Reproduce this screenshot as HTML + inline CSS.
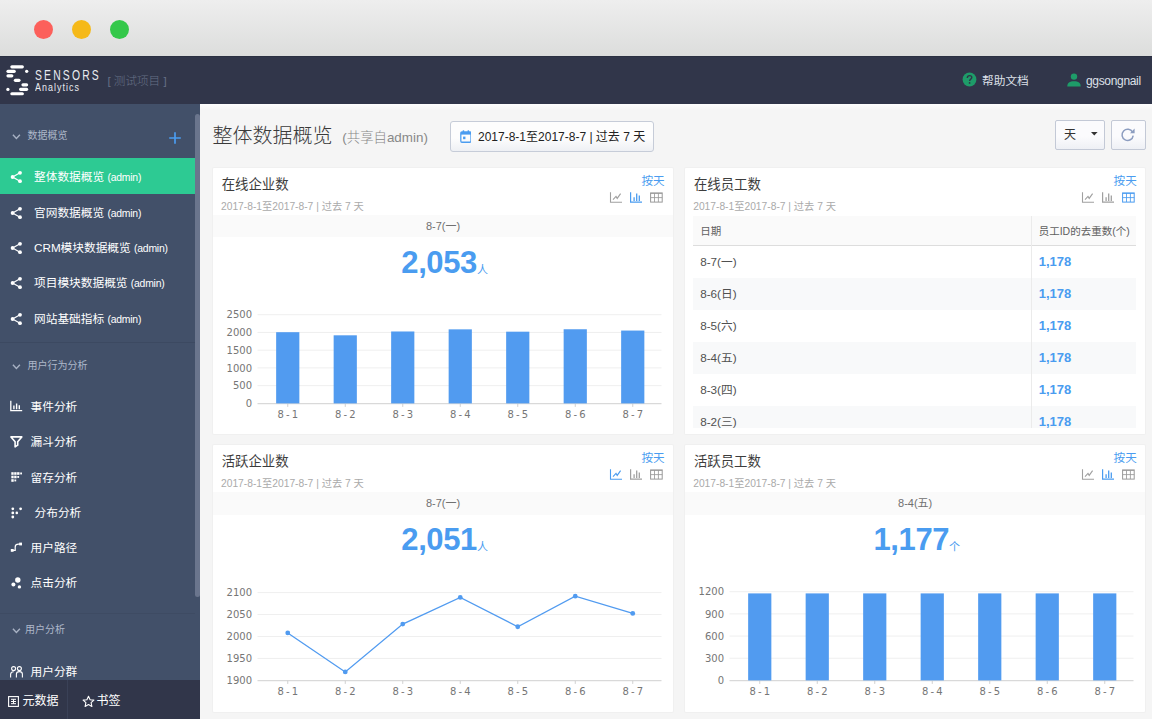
<!DOCTYPE html>
<html lang="zh-CN">
<head>
<meta charset="utf-8">
<title>整体数据概览</title>
<style>
*{box-sizing:border-box;margin:0;padding:0}
html,body{width:1152px;height:719px;overflow:hidden;background:#f5f5f5}
body{font-family:"Liberation Sans","Noto Sans CJK SC",sans-serif;font-size:12px;color:#333;position:relative}
.abs{position:absolute}
.titlebar{position:absolute;left:0;top:0;width:1152px;height:56px;background:linear-gradient(#eeeeee,#dcdddc)}
.dot{position:absolute;top:19.5px;width:19px;height:19px;border-radius:50%}
.header{position:absolute;left:0;top:56px;width:1152px;height:48px;background:#31364a;box-shadow:inset 0 1px 0 #2b3042}
.sidebar{position:absolute;left:0;top:104px;width:200px;height:615px;background:#425069;overflow:hidden}
.thumb{position:absolute;left:195px;top:10px;width:5px;height:482.5px;background:#6a758d;border-radius:2.5px}
.sec{position:absolute;left:0;width:195px;color:#aeb8c9;font-size:10px;white-space:nowrap}
.item{position:absolute;left:0;width:195px;height:35.5px;line-height:35px;color:#fff;font-size:11.7px;white-space:nowrap}
.onbg{position:absolute;left:0;top:54.3px;width:195px;height:35.3px;background:#2dca93}
.item .tx{position:absolute;left:34px;top:0.3px}
.item .tx small{font-size:10.4px;letter-spacing:-0.2px}
.item svg{position:absolute}
.sep{position:absolute;left:0;width:195px;height:1px;background:#3c4961}
.botbar{position:absolute;left:0;top:575.5px;width:200px;height:40px;background:#31364a;color:#fff;font-size:12px}
.main{position:absolute;left:200px;top:104px;width:952px;height:615px;background:#f5f5f5}
.card{position:absolute;width:460.2px;height:267px;background:#fff;border-radius:1px;overflow:hidden;box-shadow:0 0 0 1px #f0f0f0}
.card h3{position:absolute;left:8.7px;top:9px;font-size:13.4px;font-weight:400;color:#3d3d3d;line-height:16px;white-space:nowrap}
.card .sub{position:absolute;left:8px;top:33.2px;font-size:10.25px;color:#aaa;line-height:12px;white-space:nowrap}
.card .by{position:absolute;right:8.6px;top:6px;font-size:11.6px;color:#4a9cf0;line-height:14px}
.card .band{position:absolute;left:0;top:47.5px;width:460px;height:22.3px;background:#fafafa;text-align:center;font-size:11px;line-height:23.4px;color:#707070}
.card .big{position:absolute;left:1.6px;top:75.5px;width:460px;text-align:center;color:#4a9cf0;font-weight:700;font-size:31px;line-height:40px;letter-spacing:-0.4px;white-space:nowrap}
.card .big span{font-size:11px;font-weight:400;letter-spacing:0;position:relative;top:1px}
svg text{font-family:"DejaVu Sans",sans-serif}
</style>
</head>
<body>
<div class="titlebar">
  <div class="dot" style="left:34px;background:#fc605b"></div>
  <div class="dot" style="left:72px;background:#f5b919"></div>
  <div class="dot" style="left:110px;background:#34c84a"></div>
</div>
<div class="header" id="header">
  <svg class="abs" style="left:0;top:0" width="40" height="48" viewBox="0 0 40 48">
    <g fill="#fff">
      <rect x="10.3" y="9.3" width="13.6" height="3.1" rx="1.55"/>
      <rect x="6.4" y="13.8" width="9.4" height="3.1" rx="1.55"/>
      <circle cx="26.7" cy="15.35" r="1.65"/>
      <rect x="6.4" y="18.3" width="7" height="3.1" rx="1.55"/>
      <rect x="13.8" y="22.8" width="6.8" height="3.1" rx="1.55"/>
      <rect x="21.4" y="27.3" width="6.8" height="3.1" rx="1.55"/>
      <rect x="19" y="31.8" width="9.2" height="3.1" rx="1.55"/>
      <circle cx="7.9" cy="33.4" r="1.65"/>
      <rect x="10.3" y="36.2" width="13.6" height="3.1" rx="1.55"/>
    </g>
  </svg>
  <div class="abs" id="lg1" style="left:35.4px;top:11.2px;font-size:14px;line-height:16px;color:#e9ebf0;letter-spacing:2.95px;transform:scaleX(0.74);transform-origin:0 0;white-space:nowrap">SENSORS</div>
  <div class="abs" id="lg2" style="left:35.4px;top:25px;font-size:10.5px;line-height:12px;color:#e9ebf0;letter-spacing:1.2px;transform:scaleX(0.85);transform-origin:0 0;white-space:nowrap">Analytics</div>
  <div class="abs" id="proj" style="left:107.4px;top:17.6px;font-size:11.6px;line-height:14px;color:#667086;white-space:nowrap;font-weight:300">[ 测试项目 ]</div>
  <svg class="abs" style="left:962px;top:16px" width="15" height="15" viewBox="0 0 15 15">
    <circle cx="7.5" cy="7.5" r="6.9" fill="#1e9c69"/>
    <path d="M5.3 5.9 C5.3 4.4 6.3 3.6 7.6 3.6 C8.9 3.6 9.8 4.4 9.8 5.5 C9.8 7.1 7.6 7.2 7.6 8.9" fill="none" stroke="#2f3549" stroke-width="1.4"/>
    <circle cx="7.6" cy="10.9" r="0.9" fill="#2f3549"/>
  </svg>
  <div class="abs" id="help" style="left:982px;top:16.8px;font-size:11.7px;line-height:16px;color:#dde0e8;white-space:nowrap">帮助文档</div>
  <svg class="abs" style="left:1067px;top:17px" width="14" height="14" viewBox="0 0 14 14">
    <circle cx="7" cy="3.6" r="3.2" fill="#1e9c69"/>
    <path d="M0.3 13.4 C0.3 9.6 2.6 8.2 7 8.2 C11.4 8.2 13.7 9.6 13.7 13.4 Z" fill="#1e9c69"/>
  </svg>
  <div class="abs" id="user" style="left:1086px;top:16.6px;font-size:12px;line-height:16px;color:#dde0e8;white-space:nowrap;letter-spacing:-0.33px">ggsongnail</div>
</div>
<div class="sidebar" id="sidebar">
<div class="thumb"></div>
<div class="sec" style="top:24px;height:14px;line-height:14px"><svg class="abs" style="left:12px;top:5.6px" width="9" height="6" viewBox="0 0 9 6"><path d="M0.9 0.8 L4.4 4.4 L7.9 0.8" fill="none" stroke="#a8b2c4" stroke-width="1.4"/></svg><span class="abs" style="left:27.5px;top:1.2px">数据概览</span></div>
<svg class="abs" style="left:168px;top:27.3px" width="14" height="14" viewBox="0 0 14 14"><path d="M7 1.2 V12.8 M1.2 7 H12.8" stroke="#4a9cf0" stroke-width="1.7" fill="none"/></svg>
<div class="onbg"></div><div class="item" style="top:55.1px"><svg style="left:10px;top:11.2px" width="14" height="14" viewBox="0 0 14 14"><path d="M10 2.8 L2.6 7 L10 11.2" fill="none" stroke="#fff" stroke-width="1.2"/><circle cx="2.6" cy="7" r="1.9" fill="#fff"/><circle cx="10" cy="2.8" r="1.9" fill="#fff"/><circle cx="10" cy="11.2" r="1.9" fill="#fff"/></svg><span class="tx">整体数据概览 <small>(admin)</small></span></div>
<div class="item" style="top:90.6px"><svg style="left:10px;top:11.2px" width="14" height="14" viewBox="0 0 14 14"><path d="M10 2.8 L2.6 7 L10 11.2" fill="none" stroke="#fff" stroke-width="1.2"/><circle cx="2.6" cy="7" r="1.9" fill="#fff"/><circle cx="10" cy="2.8" r="1.9" fill="#fff"/><circle cx="10" cy="11.2" r="1.9" fill="#fff"/></svg><span class="tx">官网数据概览 <small>(admin)</small></span></div>
<div class="item" style="top:125.9px"><svg style="left:10px;top:11.2px" width="14" height="14" viewBox="0 0 14 14"><path d="M10 2.8 L2.6 7 L10 11.2" fill="none" stroke="#fff" stroke-width="1.2"/><circle cx="2.6" cy="7" r="1.9" fill="#fff"/><circle cx="10" cy="2.8" r="1.9" fill="#fff"/><circle cx="10" cy="11.2" r="1.9" fill="#fff"/></svg><span class="tx">CRM模块数据概览 <small>(admin)</small></span></div>
<div class="item" style="top:161.1px"><svg style="left:10px;top:11.2px" width="14" height="14" viewBox="0 0 14 14"><path d="M10 2.8 L2.6 7 L10 11.2" fill="none" stroke="#fff" stroke-width="1.2"/><circle cx="2.6" cy="7" r="1.9" fill="#fff"/><circle cx="10" cy="2.8" r="1.9" fill="#fff"/><circle cx="10" cy="11.2" r="1.9" fill="#fff"/></svg><span class="tx">项目模块数据概览 <small>(admin)</small></span></div>
<div class="item" style="top:196.4px"><svg style="left:10px;top:11.2px" width="14" height="14" viewBox="0 0 14 14"><path d="M10 2.8 L2.6 7 L10 11.2" fill="none" stroke="#fff" stroke-width="1.2"/><circle cx="2.6" cy="7" r="1.9" fill="#fff"/><circle cx="10" cy="2.8" r="1.9" fill="#fff"/><circle cx="10" cy="11.2" r="1.9" fill="#fff"/></svg><span class="tx">网站基础指标 <small>(admin)</small></span></div>
<div class="sep" style="top:238px"></div>
<div class="sec" style="top:254px;height:14px;line-height:14px"><svg class="abs" style="left:12px;top:5.6px" width="9" height="6" viewBox="0 0 9 6"><path d="M0.9 0.8 L4.4 4.4 L7.9 0.8" fill="none" stroke="#a8b2c4" stroke-width="1.4"/></svg><span class="abs" style="left:27.5px;top:0.8px">用户行为分析</span></div>
<div class="item" style="top:284.8px"><svg style="left:10px;top:11px" width="13" height="12" viewBox="0 0 13 12"><path d="M0.8 0.8 V10.7 H12.2" fill="none" stroke="#fff" stroke-width="1.3"/><path d="M3.9 5.6 V9.2 M6.6 3.6 V9.2 M9.3 5.2 V9.2" stroke="#fff" stroke-width="1.4" fill="none"/></svg><span class="tx" style="left:30.5px">事件分析</span></div>
<div class="item" style="top:320px"><svg style="left:10px;top:12px" width="13" height="12" viewBox="0 0 13 12"><path d="M1 0.9 H11.8 L7.7 5.8 V9.2 L5.1 10.9 V5.8 Z" fill="none" stroke="#fff" stroke-width="1.6" stroke-linejoin="round"/></svg><span class="tx" style="left:30.5px">漏斗分析</span></div>
<div class="item" style="top:355.3px"><svg style="left:11px;top:13px" width="12" height="11" viewBox="0 0 12 11"><g fill="#fff"><rect x="0.3" y="0.2" width="2.4" height="2.6"/><rect x="3.2" y="0.2" width="2.4" height="2.6"/><rect x="6.1" y="0.2" width="2.4" height="2.6"/><rect x="9.2" y="0.5" width="1.8" height="1.9"/><rect x="0.3" y="3.7" width="2.4" height="2.6"/><rect x="3.2" y="3.7" width="2.4" height="2.6"/><rect x="6.3" y="4" width="1.8" height="1.9"/><rect x="0.3" y="7.2" width="2.4" height="2.6"/><rect x="3.4" y="7.5" width="1.8" height="1.9"/></g></svg><span class="tx" style="left:30.5px">留存分析</span></div>
<div class="item" style="top:390.5px"><svg style="left:11px;top:12px" width="12" height="12" viewBox="0 0 12 12"><g fill="#fff"><circle cx="1.8" cy="1.8" r="1.4"/><circle cx="1.8" cy="5.9" r="1.4"/><circle cx="1.8" cy="10" r="1.4"/><circle cx="5.8" cy="5.9" r="1.3"/><circle cx="9.6" cy="1.8" r="1.4"/></g></svg><span class="tx" style="left:34.5px">分布分析</span></div>
<div class="item" style="top:425.7px"><svg style="left:10px;top:12px" width="13" height="11" viewBox="0 0 13 11"><path d="M2.2 8.4 H5.2 V5 C5.2 2.6 6.4 2.2 8.4 2.2 H10.4" fill="none" stroke="#fff" stroke-width="1.2"/><rect x="0.8" y="7" width="2.8" height="2.8" fill="#fff"/><rect x="9.2" y="0.6" width="2.8" height="2.8" fill="#fff"/></svg><span class="tx" style="left:30.5px">用户路径</span></div>
<div class="item" style="top:461px"><svg style="left:11px;top:12px" width="12" height="12" viewBox="0 0 12 12"><g fill="#fff"><circle cx="6.8" cy="3" r="2.7"/><circle cx="2.4" cy="7.6" r="2"/><circle cx="8.4" cy="9.9" r="1.7"/></g></svg><span class="tx" style="left:30.5px">点击分析</span></div>
<div class="sep" style="top:508.5px;background:#3e4b63"></div>
<div class="sec" style="top:518.5px;height:14px;line-height:14px"><svg class="abs" style="left:12px;top:5.6px" width="9" height="6" viewBox="0 0 9 6"><path d="M0.9 0.8 L4.4 4.4 L7.9 0.8" fill="none" stroke="#a8b2c4" stroke-width="1.4"/></svg><span class="abs" style="left:25px">用户分析</span></div>
<div class="item" style="top:549.5px"><svg style="left:10px;top:12px" width="13" height="12" viewBox="0 0 13 12"><g fill="none" stroke="#fff" stroke-width="1.1"><circle cx="3.6" cy="2.6" r="2"/><circle cx="9.4" cy="2.6" r="2"/><path d="M0.6 11.4 V8.6 C0.6 6.6 2 5.8 3.6 5.8 M12.4 11.4 V8 C12.4 6.4 11 5.6 9.4 5.6 C7.8 5.6 6.4 6.4 6.4 8 V11.4"/></g></svg><span class="tx" style="left:30.5px">用户分群</span></div>
<div class="botbar"><div class="abs" style="left:67px;top:0;width:1px;height:39px;background:#3a4157"></div><svg class="abs" style="left:8px;top:16px" width="11" height="11" viewBox="0 0 11 11"><rect x="0.6" y="0.6" width="9.8" height="9.8" fill="none" stroke="#fff" stroke-width="1.1"/><path d="M3 3.3 H8 M3 5.5 H8 M3 7.7 H8 M5.5 3.3 V7.7" stroke="#fff" stroke-width="1" fill="none"/></svg><span class="abs" style="left:22.5px;top:13.5px;line-height:16px;white-space:nowrap">元数据</span><svg class="abs" style="left:82px;top:15px" width="13" height="13" viewBox="0 0 13 13"><path d="M6.5 1.2 L8.1 4.7 L11.9 5.1 L9.1 7.7 L9.9 11.5 L6.5 9.6 L3.1 11.5 L3.9 7.7 L1.1 5.1 L4.9 4.7 Z" fill="none" stroke="#fff" stroke-width="1.1" stroke-linejoin="round"/></svg><span class="abs" style="left:96.5px;top:13.5px;line-height:16px;white-space:nowrap">书签</span></div>
</div>
<div class="main" id="main">
<div class="abs" style="left:0;top:0;width:952px;height:6px;background:linear-gradient(#fdfdfd,#f5f5f5)"></div>
<div class="abs" id="ttl" style="left:12.5px;top:18.4px;font-size:20px;line-height:28px;color:#3a3a3a;white-space:nowrap;font-weight:300">整体数据概览</div>
<div class="abs" id="shr" style="left:142.3px;top:24.2px;font-size:13.4px;line-height:20px;color:#888;white-space:nowrap;font-weight:300">(共享自admin)</div>
<div class="abs" style="left:250px;top:17px;width:204px;height:30.5px;border:1px solid #c6ccd8;border-radius:3px;background:linear-gradient(#fdfdfd 55%,#eef0f4)"></div>
<svg class="abs" style="left:259.6px;top:26px" width="11.8" height="13" viewBox="0 0 13 13" preserveAspectRatio="none"><rect x="0.9" y="2" width="11.2" height="10.2" rx="1.2" fill="none" stroke="#4a9cf0" stroke-width="1.4"/><rect x="0.9" y="2" width="11.2" height="2.6" fill="#4a9cf0"/><rect x="3" y="0.3" width="1.6" height="2.4" fill="#4a9cf0"/><rect x="8.4" y="0.3" width="1.6" height="2.4" fill="#4a9cf0"/><rect x="3.4" y="6.6" width="2.6" height="2.6" fill="#4a9cf0"/></svg>
<div class="abs" id="dt" style="left:278px;top:24.5px;font-size:12px;line-height:16px;color:#222;white-space:nowrap;letter-spacing:0">2017-8-1至2017-8-7 | 过去 7 天</div>
<div class="abs" style="left:855px;top:16px;width:50px;height:30px;border:1px solid #c3c9d6;border-radius:2px;background:linear-gradient(#fbfbfd 55%,#eef0f5)"></div>
<div class="abs" style="left:864px;top:22.5px;font-size:12px;line-height:16px;color:#333;">天</div>
<svg class="abs" style="left:891.2px;top:28.4px" width="7" height="4" viewBox="0 0 7 4"><path d="M0 0 H6.6 L3.3 3.5 Z" fill="#333"/></svg>
<div class="abs" style="left:911px;top:16px;width:35px;height:30px;border:1px solid #c3c9d6;border-radius:2px;background:linear-gradient(#fbfbfd 55%,#eef0f5)"></div>
<svg class="abs" style="left:920px;top:22.6px" width="16" height="15" viewBox="0 0 16 15"><path d="M12.6 5.2 A5.6 5.6 0 1 0 13.2 8.6" fill="none" stroke="#8c9dc0" stroke-width="1.5"/><path d="M14.6 1.6 V6.2 H10 Z" fill="#8c9dc0"/></svg>
<div class="card" id="c1" style="left:13px;top:63.7px;height:266.6px"><h3>在线企业数</h3><div class="sub">2017-8-1至2017-8-7 | 过去 7 天</div><div class="by">按天</div><svg class="abs" style="left:396px;top:23px" width="56" height="14" viewBox="0 0 56 14">
<path d="M1.5 1.2 V11.2 H13" fill="none" stroke="#a0a0a0" stroke-width="1.1"/><path d="M4 8.6 L7 5.4 L8.2 7.4 L11.6 2.6" fill="none" stroke="#a0a0a0" stroke-width="1.1"/>
<path d="M21.6 1.2 V11.2 H33" fill="none" stroke="#4a9cf0" stroke-width="1.2"/><path d="M25.1 6.2 V10 M27.7 2.4 V10 M30.3 4.6 V10" fill="none" stroke="#4a9cf0" stroke-width="1.3"/>
<rect x="41.6" y="1.9" width="11.6" height="9.2" fill="none" stroke="#999" stroke-width="1"/><path d="M41.6 2.5 H53.2 M41.6 6.6 H53.2 M45.5 2 V11 M49.4 2 V11" fill="none" stroke="#999" stroke-width="0.85"/>
</svg><div class="band">8-7(一)</div><div class="big">2,053<span>人</span></div><svg class="abs" style="left:0;top:0" width="460" height="266" viewBox="0 0 460 266" font-family="DejaVu Sans, sans-serif" font-size="10" fill="#767676"><path d="M44.5 146.70 H448.5" stroke="#efefef" stroke-width="1"/><text x="39" y="150.40" text-anchor="end">2500</text><path d="M44.5 164.44 H448.5" stroke="#efefef" stroke-width="1"/><text x="39" y="168.14" text-anchor="end">2000</text><path d="M44.5 182.18 H448.5" stroke="#efefef" stroke-width="1"/><text x="39" y="185.88" text-anchor="end">1500</text><path d="M44.5 199.92 H448.5" stroke="#efefef" stroke-width="1"/><text x="39" y="203.62" text-anchor="end">1000</text><path d="M44.5 217.66 H448.5" stroke="#efefef" stroke-width="1"/><text x="39" y="221.36" text-anchor="end">500</text><text x="39" y="239.10" text-anchor="end">0</text><path d="M44.5 235.70 H448.5" stroke="#d0d0d0" stroke-width="1"/><path d="M74.75 235.70 V238.90" stroke="#d0d0d0" stroke-width="1"/><text x="74.75" y="250.00" text-anchor="middle" letter-spacing="2.2" dx="1.1">8-1</text><rect x="63.15" y="164.19" width="23.2" height="71.21" fill="#519bf0"/><path d="M132.25 235.70 V238.90" stroke="#d0d0d0" stroke-width="1"/><text x="132.25" y="250.00" text-anchor="middle" letter-spacing="2.2" dx="1.1">8-2</text><rect x="120.65" y="167.31" width="23.2" height="68.09" fill="#519bf0"/><path d="M189.75 235.70 V238.90" stroke="#d0d0d0" stroke-width="1"/><text x="189.75" y="250.00" text-anchor="middle" letter-spacing="2.2" dx="1.1">8-3</text><rect x="178.15" y="163.48" width="23.2" height="71.92" fill="#519bf0"/><path d="M247.25 235.70 V238.90" stroke="#d0d0d0" stroke-width="1"/><text x="247.25" y="250.00" text-anchor="middle" letter-spacing="2.2" dx="1.1">8-4</text><rect x="235.65" y="161.35" width="23.2" height="74.05" fill="#519bf0"/><path d="M304.75 235.70 V238.90" stroke="#d0d0d0" stroke-width="1"/><text x="304.75" y="250.00" text-anchor="middle" letter-spacing="2.2" dx="1.1">8-5</text><rect x="293.15" y="163.69" width="23.2" height="71.71" fill="#519bf0"/><path d="M362.25 235.70 V238.90" stroke="#d0d0d0" stroke-width="1"/><text x="362.25" y="250.00" text-anchor="middle" letter-spacing="2.2" dx="1.1">8-6</text><rect x="350.65" y="161.25" width="23.2" height="74.15" fill="#519bf0"/><path d="M419.75 235.70 V238.90" stroke="#d0d0d0" stroke-width="1"/><text x="419.75" y="250.00" text-anchor="middle" letter-spacing="2.2" dx="1.1">8-7</text><rect x="408.15" y="162.56" width="23.2" height="72.84" fill="#519bf0"/></svg></div>
<div class="card" id="c2" style="left:485.2px;top:63.7px;height:266.6px"><h3>在线员工数</h3><div class="sub">2017-8-1至2017-8-7 | 过去 7 天</div><div class="by">按天</div><svg class="abs" style="left:396px;top:23px" width="56" height="14" viewBox="0 0 56 14">
<path d="M1.5 1.2 V11.2 H13" fill="none" stroke="#a0a0a0" stroke-width="1.1"/><path d="M4 8.6 L7 5.4 L8.2 7.4 L11.6 2.6" fill="none" stroke="#a0a0a0" stroke-width="1.1"/>
<path d="M21.6 1.2 V11.2 H33" fill="none" stroke="#a0a0a0" stroke-width="1.2"/><path d="M25.1 6.2 V10 M27.7 2.4 V10 M30.3 4.6 V10" fill="none" stroke="#a0a0a0" stroke-width="1.3"/>
<rect x="41.6" y="1.9" width="11.6" height="9.2" fill="none" stroke="#4a9cf0" stroke-width="1"/><path d="M41.6 2.5 H53.2 M41.6 6.6 H53.2 M45.5 2 V11 M49.4 2 V11" fill="none" stroke="#4a9cf0" stroke-width="0.85"/>
</svg><div class="abs" style="left:8px;top:48.5px;width:443px;height:29.6px;background:#fafafa;border-bottom:1px solid #ddd"></div><div class="abs" style="left:15px;top:55.6px;font-size:10.5px;line-height:16px;color:#606060;white-space:nowrap">日期</div><div class="abs" style="left:353.5px;top:55.6px;font-size:10.5px;line-height:16px;color:#606060;white-space:nowrap">员工ID的去重数(个)</div><div class="abs" style="left:15px;top:86.7px;font-size:11.7px;line-height:16px;color:#505050;white-space:nowrap">8-7(一)</div><div class="abs" style="left:353.5px;top:86.7px;font-size:13px;line-height:16px;color:#4a9cf0;font-weight:700;white-space:nowrap">1,178</div><div class="abs" style="left:8px;top:110.4px;width:443px;height:32px;background:#f8f9fa"></div><div class="abs" style="left:15px;top:118.7px;font-size:11.7px;line-height:16px;color:#505050;white-space:nowrap">8-6(日)</div><div class="abs" style="left:353.5px;top:118.7px;font-size:13px;line-height:16px;color:#4a9cf0;font-weight:700;white-space:nowrap">1,178</div><div class="abs" style="left:15px;top:150.7px;font-size:11.7px;line-height:16px;color:#505050;white-space:nowrap">8-5(六)</div><div class="abs" style="left:353.5px;top:150.7px;font-size:13px;line-height:16px;color:#4a9cf0;font-weight:700;white-space:nowrap">1,178</div><div class="abs" style="left:8px;top:174.4px;width:443px;height:32px;background:#f8f9fa"></div><div class="abs" style="left:15px;top:182.7px;font-size:11.7px;line-height:16px;color:#505050;white-space:nowrap">8-4(五)</div><div class="abs" style="left:353.5px;top:182.7px;font-size:13px;line-height:16px;color:#4a9cf0;font-weight:700;white-space:nowrap">1,178</div><div class="abs" style="left:15px;top:214.7px;font-size:11.7px;line-height:16px;color:#505050;white-space:nowrap">8-3(四)</div><div class="abs" style="left:353.5px;top:214.7px;font-size:13px;line-height:16px;color:#4a9cf0;font-weight:700;white-space:nowrap">1,178</div><div class="abs" style="left:8px;top:238.4px;width:443px;height:32px;background:#f8f9fa"></div><div class="abs" style="left:15px;top:246.7px;font-size:11.7px;line-height:16px;color:#505050;white-space:nowrap">8-2(三)</div><div class="abs" style="left:353.5px;top:246.7px;font-size:13px;line-height:16px;color:#4a9cf0;font-weight:700;white-space:nowrap">1,178</div><div class="abs" style="left:346px;top:48.5px;width:1px;height:213px;background:#ebebeb"></div><div class="abs" style="left:0;top:260.6px;width:461px;height:8px;background:#fff"></div></div>
<div class="card" id="c3" style="left:13px;top:340.8px;height:266.9px"><h3>活跃企业数</h3><div class="sub">2017-8-1至2017-8-7 | 过去 7 天</div><div class="by">按天</div><svg class="abs" style="left:396px;top:23px" width="56" height="14" viewBox="0 0 56 14">
<path d="M1.5 1.2 V11.2 H13" fill="none" stroke="#4a9cf0" stroke-width="1.1"/><path d="M4 8.6 L7 5.4 L8.2 7.4 L11.6 2.6" fill="none" stroke="#4a9cf0" stroke-width="1.1"/>
<path d="M21.6 1.2 V11.2 H33" fill="none" stroke="#a0a0a0" stroke-width="1.2"/><path d="M25.1 6.2 V10 M27.7 2.4 V10 M30.3 4.6 V10" fill="none" stroke="#a0a0a0" stroke-width="1.3"/>
<rect x="41.6" y="1.9" width="11.6" height="9.2" fill="none" stroke="#999" stroke-width="1"/><path d="M41.6 2.5 H53.2 M41.6 6.6 H53.2 M45.5 2 V11 M49.4 2 V11" fill="none" stroke="#999" stroke-width="0.85"/>
</svg><div class="band">8-7(一)</div><div class="big">2,051<span>人</span></div><svg class="abs" style="left:0;top:0" width="460" height="266" viewBox="0 0 460 266" font-family="DejaVu Sans, sans-serif" font-size="10" fill="#767676"><path d="M44.5 147.60 H448.5" stroke="#efefef" stroke-width="1"/><text x="39" y="151.30" text-anchor="end">2100</text><path d="M44.5 169.55 H448.5" stroke="#efefef" stroke-width="1"/><text x="39" y="173.25" text-anchor="end">2050</text><path d="M44.5 191.50 H448.5" stroke="#efefef" stroke-width="1"/><text x="39" y="195.20" text-anchor="end">2000</text><path d="M44.5 213.45 H448.5" stroke="#efefef" stroke-width="1"/><text x="39" y="217.15" text-anchor="end">1950</text><text x="39" y="239.10" text-anchor="end">1900</text><path d="M44.5 235.70 H448.5" stroke="#d0d0d0" stroke-width="1"/><path d="M74.75 235.70 V238.90" stroke="#d0d0d0" stroke-width="1"/><text x="74.75" y="250.00" text-anchor="middle" letter-spacing="2.2" dx="1.1">8-1</text><path d="M132.25 235.70 V238.90" stroke="#d0d0d0" stroke-width="1"/><text x="132.25" y="250.00" text-anchor="middle" letter-spacing="2.2" dx="1.1">8-2</text><path d="M189.75 235.70 V238.90" stroke="#d0d0d0" stroke-width="1"/><text x="189.75" y="250.00" text-anchor="middle" letter-spacing="2.2" dx="1.1">8-3</text><path d="M247.25 235.70 V238.90" stroke="#d0d0d0" stroke-width="1"/><text x="247.25" y="250.00" text-anchor="middle" letter-spacing="2.2" dx="1.1">8-4</text><path d="M304.75 235.70 V238.90" stroke="#d0d0d0" stroke-width="1"/><text x="304.75" y="250.00" text-anchor="middle" letter-spacing="2.2" dx="1.1">8-5</text><path d="M362.25 235.70 V238.90" stroke="#d0d0d0" stroke-width="1"/><text x="362.25" y="250.00" text-anchor="middle" letter-spacing="2.2" dx="1.1">8-6</text><path d="M419.75 235.70 V238.90" stroke="#d0d0d0" stroke-width="1"/><text x="419.75" y="250.00" text-anchor="middle" letter-spacing="2.2" dx="1.1">8-7</text><path d="M74.75 187.95 L132.25 226.97 L189.75 179.08 L247.25 152.47 L304.75 181.74 L362.25 151.13 L419.75 168.43" fill="none" stroke="#519bf0" stroke-width="1.3"/><circle cx="74.75" cy="187.95" r="2.4" fill="#519bf0"/><circle cx="132.25" cy="226.97" r="2.4" fill="#519bf0"/><circle cx="189.75" cy="179.08" r="2.4" fill="#519bf0"/><circle cx="247.25" cy="152.47" r="2.4" fill="#519bf0"/><circle cx="304.75" cy="181.74" r="2.4" fill="#519bf0"/><circle cx="362.25" cy="151.13" r="2.4" fill="#519bf0"/><circle cx="419.75" cy="168.43" r="2.4" fill="#519bf0"/></svg></div>
<div class="card" id="c4" style="left:485.2px;top:340.8px;height:266.9px"><h3>活跃员工数</h3><div class="sub">2017-8-1至2017-8-7 | 过去 7 天</div><div class="by">按天</div><svg class="abs" style="left:396px;top:23px" width="56" height="14" viewBox="0 0 56 14">
<path d="M1.5 1.2 V11.2 H13" fill="none" stroke="#a0a0a0" stroke-width="1.1"/><path d="M4 8.6 L7 5.4 L8.2 7.4 L11.6 2.6" fill="none" stroke="#a0a0a0" stroke-width="1.1"/>
<path d="M21.6 1.2 V11.2 H33" fill="none" stroke="#4a9cf0" stroke-width="1.2"/><path d="M25.1 6.2 V10 M27.7 2.4 V10 M30.3 4.6 V10" fill="none" stroke="#4a9cf0" stroke-width="1.3"/>
<rect x="41.6" y="1.9" width="11.6" height="9.2" fill="none" stroke="#999" stroke-width="1"/><path d="M41.6 2.5 H53.2 M41.6 6.6 H53.2 M45.5 2 V11 M49.4 2 V11" fill="none" stroke="#999" stroke-width="0.85"/>
</svg><div class="band">8-4(五)</div><div class="big">1,177<span>个</span></div><svg class="abs" style="left:0;top:0" width="460" height="266" viewBox="0 0 460 266" font-family="DejaVu Sans, sans-serif" font-size="10" fill="#767676"><path d="M44.5 146.70 H448.5" stroke="#efefef" stroke-width="1"/><text x="39" y="150.40" text-anchor="end">1200</text><path d="M44.5 168.88 H448.5" stroke="#efefef" stroke-width="1"/><text x="39" y="172.57" text-anchor="end">900</text><path d="M44.5 191.05 H448.5" stroke="#efefef" stroke-width="1"/><text x="39" y="194.75" text-anchor="end">600</text><path d="M44.5 213.22 H448.5" stroke="#efefef" stroke-width="1"/><text x="39" y="216.92" text-anchor="end">300</text><text x="39" y="239.10" text-anchor="end">0</text><path d="M44.5 235.70 H448.5" stroke="#d0d0d0" stroke-width="1"/><path d="M74.75 235.70 V238.90" stroke="#d0d0d0" stroke-width="1"/><text x="74.75" y="250.00" text-anchor="middle" letter-spacing="2.2" dx="1.1">8-1</text><rect x="63.15" y="148.40" width="23.2" height="87.00" fill="#519bf0"/><path d="M132.25 235.70 V238.90" stroke="#d0d0d0" stroke-width="1"/><text x="132.25" y="250.00" text-anchor="middle" letter-spacing="2.2" dx="1.1">8-2</text><rect x="120.65" y="148.40" width="23.2" height="87.00" fill="#519bf0"/><path d="M189.75 235.70 V238.90" stroke="#d0d0d0" stroke-width="1"/><text x="189.75" y="250.00" text-anchor="middle" letter-spacing="2.2" dx="1.1">8-3</text><rect x="178.15" y="148.40" width="23.2" height="87.00" fill="#519bf0"/><path d="M247.25 235.70 V238.90" stroke="#d0d0d0" stroke-width="1"/><text x="247.25" y="250.00" text-anchor="middle" letter-spacing="2.2" dx="1.1">8-4</text><rect x="235.65" y="148.40" width="23.2" height="87.00" fill="#519bf0"/><path d="M304.75 235.70 V238.90" stroke="#d0d0d0" stroke-width="1"/><text x="304.75" y="250.00" text-anchor="middle" letter-spacing="2.2" dx="1.1">8-5</text><rect x="293.15" y="148.40" width="23.2" height="87.00" fill="#519bf0"/><path d="M362.25 235.70 V238.90" stroke="#d0d0d0" stroke-width="1"/><text x="362.25" y="250.00" text-anchor="middle" letter-spacing="2.2" dx="1.1">8-6</text><rect x="350.65" y="148.40" width="23.2" height="87.00" fill="#519bf0"/><path d="M419.75 235.70 V238.90" stroke="#d0d0d0" stroke-width="1"/><text x="419.75" y="250.00" text-anchor="middle" letter-spacing="2.2" dx="1.1">8-7</text><rect x="408.15" y="148.40" width="23.2" height="87.00" fill="#519bf0"/></svg></div>
</div>
</body>
</html>
